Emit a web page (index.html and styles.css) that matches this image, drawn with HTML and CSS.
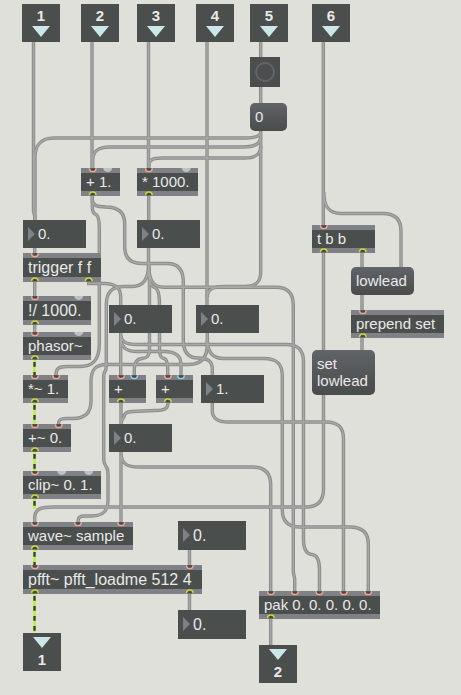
FILE: index.html
```html
<!DOCTYPE html>
<html lang="en">
<head>
<meta charset="utf-8">
<title>Patcher</title>
<link rel="stylesheet" href="styles.css">
</head>
<body>
<main class="patcher">
  <svg class="layer" width="461" height="695" viewBox="0 0 461 695">
    <defs>
      <g id="cables">
        <path d="M260.700 132C260.500 136 255 138 246 138H54C40 138 35 147 35 157V220"/>
        <path d="M260.700 137C260.500 144 254 147 243 147H110C98 147 93 151 92.700 160V168"/>
        <path d="M260.700 146C260.500 155 255 158 245 158H162C152 158 149 160 149 164V168"/>
        <path d="M33.500 42V211L34.700 216V220M34.700 248V253M34.700 282V296M34.700 325V332"/>
        <path d="M88.700 282V283.500H104C116 283.500 120.700 288 120.700 297V305"/>
        <path d="M92 42V168M92.300 196V200C92.300 206 98 206.500 106 207C119 207 124.700 213 124.700 224V247C124.700 258 130 263.500 142 263.500H167C178 263.500 183.300 270 183.300 282V340C183.300 353 189 358 198 358C208 358.500 212.300 361 212.300 369V375"/>
        <path d="M92.300 196V207C92.300 211 93 213.500 96 214.500C99 216 99.300 222 99.300 229V344C99.300 361 92 366.500 80 366.500H67C58 366.500 56 369 56 375"/>
        <path d="M148.500 42V168M148.700 196V220M148.500 248V265C148.500 280 143 286.500 132 286.500H124C111 286.500 106.300 293 106.300 305V366C106 374 103.700 369 103.700 378V459C103.700 468 108 464 108 474V500C108 512 102 516 92 516H85C80 516 78 517 78 522"/>
        <path d="M148.500 262C148.500 272 149.500 274 149.500 283V350C149.500 356 147 358 142 358.500C136 359 134.300 363 134.300 369V375"/>
        <path d="M148.700 264C148.700 280 150 286 154 287C159 288 159.500 297 159.500 305V349C159.500 355 161 358 164 358.500C167 359 167.700 364 167.700 369V375"/>
        <path d="M148.700 264C148.700 280 153 287.300 164 287.300H276C288 287.300 293.300 294 293.300 305V572L294.700 579V591"/>
        <path d="M260.700 42V57M260.700 87V103M260.700 130V272C260.700 282 256 286.500 245 286.500H224C212 286.500 207.300 290 207.300 297"/>
        <path d="M207 42V305M207.300 333V344C207.300 358 201 364.500 189 364.500H107C95 364.500 91 370 91 382V401C91 413 85 418.500 73 418.500H66C60 418.500 58.500 420 58.500 424"/>
        <path d="M207.300 340C207.300 353 213 358.500 224 358.500H264C277 358.500 282.300 364 282.300 376V510C282.300 521 288 527 300 527H350C362 527 368.300 532 368.300 544V591"/>
        <path d="M212.300 403V411C212.300 418 218 422 228 422H326C338 422 343.500 427 343.500 439V591"/>
        <path d="M120.700 333V375M120.700 333C120.700 342 126 344.500 137 344.500H286C298 344.500 303.500 350 303.500 362V539C303.500 549 306 554 312 554.500C317 555 319.500 560 319.500 570V591"/>
        <path d="M120.700 336C120.700 348 126 351.500 138 351.500H164C176 351.500 181 356 181 365V375"/>
        <path d="M121 403V424M168 403C168 409 164 410.500 155 410.500L133 411.500C126 412 124.500 413 124 417C122.500 419 121 420 121 424"/>
        <path d="M121 452V522M121 452C121 464 127 467 139 467H252C265 467 270.700 473 270.700 485V591M270.700 619V645"/>
        <path d="M323.300 42V225M323.800 192C323.800 207 329 213.500 341 213.500H383C395 213.500 401 219 401 231V267"/>
        <path d="M323.500 253V350M362 253V267M362 295V310M362 338V350"/>
        <path d="M323.500 395V489C323.500 501 318 507 306 507H55C40 507 34.700 509 34.700 518V522"/>
        <path d="M189.500 550V565M189.500 594V610"/>
      </g>
      <g id="inlet"><path class="port-fill" d="M-3.300 0A3.300 3.300 0 0 0 3.300 0Z"/><path class="ring red" d="M-3.300 0A3.300 3.300 0 0 0 3.300 0"/></g>
      <g id="cold"><path class="port-fill" d="M-3.300 0A3.300 3.300 0 0 0 3.300 0Z"/><path class="ring blue" d="M-3.300 0A3.300 3.300 0 0 0 3.300 0"/></g>
      <g id="outlet"><path class="port-fill" d="M-3.300 0A3.300 3.300 0 0 1 3.300 0Z"/><path class="ring yellow" d="M-3.300 0A3.300 3.300 0 0 1 3.300 0"/></g>
      <path id="blank" class="blank" d="M-4.500 0A4.500 4 0 0 0 4.500 0Z"/>
    </defs>
    <use href="#cables" class="cable-edge"/>
    <use href="#cables" class="cable-core"/>
    <g class="signal">
      <path class="signal-edge" d="M34.500 360V375M34.500 403V424M34.500 452V471M34.500 499V509M34.500 550V565M34.500 594V632"/>
      <path class="signal-dash" d="M34.500 360V375M34.500 403V424M34.500 452V471M34.500 499V509M34.500 550V565M34.500 594V632"/>
    </g>
  </svg>

  <div class="io in1"><span>1</span><i></i></div>
  <div class="io in2"><span>2</span><i></i></div>
  <div class="io in3"><span>3</span><i></i></div>
  <div class="io in4"><span>4</span><i></i></div>
  <div class="io in5"><span>5</span><i></i></div>
  <div class="io in6"><span>6</span><i></i></div>

  <div class="bang"></div>
  <div class="message msg-zero">0</div>
  <div class="object add-one">+ 1.</div>
  <div class="object mul-thousand">* 1000.</div>
  <div class="number num-a">0.</div>
  <div class="number num-b">0.</div>
  <div class="object large trigger">trigger f f</div>
  <div class="object large divide">!/ 1000.</div>
  <div class="object phasor">phasor~</div>
  <div class="number num-c">0.</div>
  <div class="number num-d">0.</div>
  <div class="object mul-sig">*~ 1.</div>
  <div class="object sum-a">+</div>
  <div class="object sum-b">+</div>
  <div class="number num-e">1.</div>
  <div class="object add-sig">+~ 0.</div>
  <div class="number num-f">0.</div>
  <div class="object clip">clip~ 0. 1.</div>
  <div class="object wave">wave~ sample</div>
  <div class="number large num-g">0.</div>
  <div class="object large pfft">pfft~ pfft_loadme 512 4</div>
  <div class="number large num-h">0.</div>
  <div class="object pak">pak 0. 0. 0. 0. 0.</div>
  <div class="object tbb">t b b</div>
  <div class="message msg-lowlead">lowlead</div>
  <div class="object prepend">prepend set</div>
  <div class="message tall msg-set">set<br>lowlead</div>
  <div class="io out out1"><i></i><span>1</span></div>
  <div class="io out out2"><i></i><span>2</span></div>

  <svg class="layer" width="461" height="695" viewBox="0 0 461 695">
    <use href="#inlet" x="92.700" y="168.300"/><use href="#blank" x="107.700" y="168"/><use href="#outlet" x="92.700" y="195.300"/>
    <use href="#inlet" x="148.900" y="168.300"/><use href="#blank" x="186.300" y="168"/><use href="#outlet" x="148.900" y="195.300"/>
    <use href="#inlet" x="34.900" y="253.300"/><use href="#outlet" x="34.900" y="281.300"/><use href="#outlet" x="88.700" y="281.300"/>
    <use href="#inlet" x="34.900" y="296.300"/><use href="#blank" x="78.700" y="296"/><use href="#outlet" x="34.900" y="324.300"/>
    <use href="#inlet" x="34.900" y="332.300"/><use href="#blank" x="78.700" y="332"/><use href="#outlet" x="34.900" y="359.300"/>
    <use href="#inlet" x="34.900" y="375.300"/><use href="#inlet" x="56.200" y="375.300"/><use href="#outlet" x="34.900" y="402.300"/>
    <use href="#inlet" x="121" y="375.300"/><use href="#cold" x="134.200" y="375.300"/><use href="#outlet" x="121" y="402.300"/>
    <use href="#inlet" x="167.900" y="375.300"/><use href="#cold" x="181" y="375.300"/><use href="#outlet" x="167.900" y="402.300"/>
    <use href="#inlet" x="34.900" y="424.300"/><use href="#inlet" x="58.700" y="424.300"/><use href="#outlet" x="34.900" y="451.300"/>
    <use href="#inlet" x="34.900" y="471.300"/><use href="#blank" x="61.700" y="471"/><use href="#blank" x="88.700" y="471"/><use href="#outlet" x="34.900" y="498.300"/>
    <use href="#inlet" x="34.900" y="522.300"/><use href="#inlet" x="78" y="522.300"/><use href="#inlet" x="121.200" y="522.300"/><use href="#outlet" x="34.900" y="549.300"/>
    <use href="#inlet" x="34.900" y="565.300"/><use href="#inlet" x="189.800" y="565.300"/><use href="#outlet" x="34.900" y="593.300"/><use href="#outlet" x="189.800" y="593.300"/>
    <use href="#inlet" x="270.900" y="591.300"/><use href="#inlet" x="295" y="591.300"/><use href="#inlet" x="319.400" y="591.300"/><use href="#inlet" x="343.800" y="591.300"/><use href="#inlet" x="368.200" y="591.300"/><use href="#outlet" x="270.900" y="618.300"/>
    <use href="#inlet" x="323.800" y="225.300"/><use href="#outlet" x="323.800" y="252.300"/><use href="#outlet" x="362.700" y="252.300"/>
    <use href="#inlet" x="362.800" y="310.300"/><use href="#outlet" x="362.800" y="337.300"/>
  </svg>
</main>
</body>
</html>
```
FILE: styles.css
```css
*, *::before { box-sizing: border-box; }

body {
  margin: 0;
  background: #dfe0da;
}

.patcher {
  position: relative;
  width: 461px;
  height: 695px;
  overflow: hidden;
  background: #dfe0da;
  font: 15px/28px "Liberation Sans", Arial, sans-serif;
  color: #e9e9eb;
}

.patcher > * { position: absolute; }

.layer { left: 0; top: 0; }

/* patch cords */
.cable-edge, .cable-core { fill: none; }
.cable-edge { stroke: #8b8c8a; stroke-width: 3.4; }
.cable-core { stroke: #a8a8a7; stroke-width: 1.4; }
.signal { fill: none; }
.signal-edge { stroke: #bdf04f; stroke-width: 3; }
.signal-dash { stroke: #3d4133; stroke-width: 2.4; stroke-dasharray: 4.8 5.2; stroke-dashoffset: -2; }

/* ports */
.port-fill { fill: #454a48; }
.ring { fill: none; stroke-width: 1.5; }
.red { stroke: #f5a596; }
.blue { stroke: #8ed4e6; }
.yellow { stroke: #cdd638; }
.blank { fill: #bfc0c3; }

/* boxes */
.object {
  height: 28px;
  padding-left: 5px;
  background: #4a4e4c;
  box-shadow: inset 0 5px #808187, inset 0 -5px #808187;
  white-space: nowrap;
}

.number {
  width: 63px;
  height: 28px;
  padding-left: 15px;
  background: #4a4e4c;
}

.number::before {
  content: "";
  position: absolute;
  left: 5px;
  top: 7px;
  border: solid transparent;
  border-width: 7px 0 7px 7px;
  border-left-color: #808187;
}

.large {
  height: 29px;
  font-size: 16px;
  line-height: 29px;
}

.number.large { width: 68px; }

.message {
  height: 28px;
  padding-left: 5px;
  border-radius: 5px;
  background: linear-gradient(#616468, #484c4b);
}

.message.tall {
  height: 45px;
  padding-top: 5px;
  line-height: 17px;
}

.bang {
  left: 250px;
  top: 57px;
  width: 30px;
  height: 30px;
  padding: 5px;
  background: #4a4e4c;
}

.bang::before {
  content: "";
  display: block;
  height: 20px;
  border: 2px solid #636469;
  border-radius: 50%;
}

.io {
  top: 4px;
  width: 38px;
  height: 38px;
  padding-top: 4px;
  display: flex;
  flex-direction: column;
  align-items: center;
  background: #4a4e4c;
  font-weight: bold;
  line-height: 16px;
}

.io span { height: 18px; }

.io i {
  border: solid transparent;
  border-width: 11.5px 9.2px 0;
  border-top-color: #cde6ea;
}

.out span { margin-top: 4px; }

/* placement on the canvas */
.in1 { left: 22px; }
.in2 { left: 81px; }
.in3 { left: 137px; }
.in4 { left: 196px; }
.in5 { left: 250px; }
.in6 { left: 312px; }
.msg-zero { left: 250px; top: 103px; width: 37px; }
.add-one { left: 81px; top: 168px; width: 39px; }
.mul-thousand { left: 137px; top: 168px; width: 61px; }
.num-a { left: 23px; top: 220px; }
.num-b { left: 137px; top: 220px; }
.trigger { left: 23px; top: 253px; width: 78px; }
.divide { left: 23px; top: 296px; width: 68px; }
.phasor { left: 23px; top: 332px; width: 68px; }
.num-c { left: 109px; top: 305px; }
.num-d { left: 196px; top: 305px; }
.mul-sig { left: 23px; top: 375px; width: 45px; }
.sum-a { left: 109px; top: 375px; width: 37px; }
.sum-b { left: 156px; top: 375px; width: 37px; }
.num-e { left: 201px; top: 375px; }
.add-sig { left: 23px; top: 424px; width: 48px; }
.num-f { left: 109px; top: 424px; }
.clip { left: 23px; top: 471px; width: 78px; }
.wave { left: 23px; top: 522px; width: 110px; }
.num-g { left: 178px; top: 521px; }
.pfft { left: 23px; top: 565px; width: 179px; }
.num-h { left: 178px; top: 610px; }
.pak { left: 259px; top: 591px; width: 121px; }
.tbb { left: 312px; top: 225px; width: 63px; }
.msg-lowlead { left: 351px; top: 267px; width: 63px; }
.prepend { left: 351px; top: 310px; width: 93px; }
.msg-set { left: 312px; top: 350px; width: 63px; }
.out1 { left: 23px; top: 633px; }
.out2 { left: 259px; top: 645px; }
```
